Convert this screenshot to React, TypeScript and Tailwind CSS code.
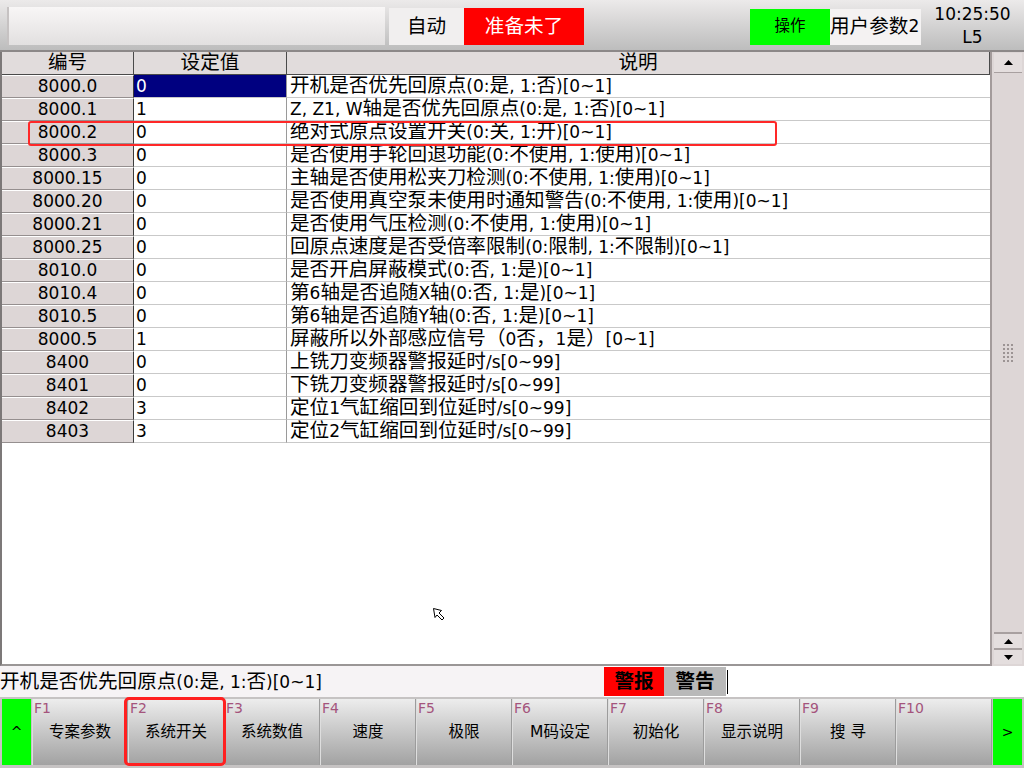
import React from "react";

const rows: [string, string, string][] = [
  ["8000.0", "0", "开机是否优先回原点(0:是, 1:否)[0~1]"],
  ["8000.1", "1", "Z, Z1, W轴是否优先回原点(0:是, 1:否)[0~1]"],
  ["8000.2", "0", "绝对式原点设置开关(0:关, 1:开)[0~1]"],
  ["8000.3", "0", "是否使用手轮回退功能(0:不使用, 1:使用)[0~1]"],
  ["8000.15", "0", "主轴是否使用松夹刀检测(0:不使用, 1:使用)[0~1]"],
  ["8000.20", "0", "是否使用真空泵未使用时通知警告(0:不使用, 1:使用)[0~1]"],
  ["8000.21", "0", "是否使用气压检测(0:不使用, 1:使用)[0~1]"],
  ["8000.25", "0", "回原点速度是否受倍率限制(0:限制, 1:不限制)[0~1]"],
  ["8010.0", "0", "是否开启屏蔽模式(0:否, 1:是)[0~1]"],
  ["8010.4", "0", "第6轴是否追随X轴(0:否, 1:是)[0~1]"],
  ["8010.5", "0", "第6轴是否追随Y轴(0:否, 1:是)[0~1]"],
  ["8000.5", "1", "屏蔽所以外部感应信号（0否，1是）[0~1]"],
  ["8400", "0", "上铣刀变频器警报延时/s[0~99]"],
  ["8401", "0", "下铣刀变频器警报延时/s[0~99]"],
  ["8402", "3", "定位1气缸缩回到位延时/s[0~99]"],
  ["8403", "3", "定位2气缸缩回到位延时/s[0~99]"],
];

const fkeys: [string, string][] = [
  ["F1", "专案参数"],
  ["F2", "系统开关"],
  ["F3", "系统数值"],
  ["F4", "速度"],
  ["F5", "极限"],
  ["F6", "M码设定"],
  ["F7", "初始化"],
  ["F8", "显示说明"],
  ["F9", "搜 寻"],
  ["F10", ""],
];

function Mixed({ text }: { text: string }) {
  const parts = text.split(/([\u3000-\u9fff\uff00-\uffef]+)/);
  return (
    <>
      {parts.map((p, i) =>
        /[\u3000-\u9fff\uff00-\uffef]/.test(p) ? (
          <span key={i} className="text-[19.6px]">{p}</span>
        ) : (
          <span key={i}>{p}</span>
        )
      )}
    </>
  );
}

function Tri({ up }: { up: boolean }) {
  return (
    <svg width="9" height="5" viewBox="0 0 9 5">
      {up ? <polygon points="0,5 9,5 4.5,0" fill="#000" /> : <polygon points="0,0 9,0 4.5,5" fill="#000" />}
    </svg>
  );
}

export default function App() {
  return (
    <div className="relative w-[1024px] h-[768px] overflow-hidden bg-[#cfcbcb] flex flex-col font-[family-name:'DejaVu_Sans','Noto_Sans_CJK_SC',sans-serif] text-black">
      {/* Top bar */}
      <div className="h-[52px] shrink-0 flex items-start bg-gradient-to-b from-[#eceaea] to-[#bdbdbd] border-b-2 border-[#8c8888]">
        <div className="ml-[7px] mt-[7px] w-[378px] h-[38px] bg-gradient-to-b from-[#f8f6f6] to-[#e2e0e0] border-l-2 border-[#c6c2c2]" />
        <div className="ml-[4px] mt-[8px] w-[75px] h-[37px] bg-[#f1efef] flex items-center justify-center text-[19.6px]">自动</div>
        <div className="mt-[8px] w-[120px] h-[37px] bg-[#ff0000] text-white flex items-center justify-center text-[19.6px]">准备未了</div>
        <div className="flex-1" />
        <div className="mt-[9px] w-[80px] h-[36px] bg-[#00ff00] flex items-center justify-center text-[15.5px]">操作</div>
        <div className="mt-[9px] w-[91px] h-[36px] bg-[#f4f2f2] flex items-center text-[19.6px] whitespace-nowrap overflow-hidden">
          用户参数<span className="text-[17px]">2</span>
        </div>
        <div className="w-[103px] h-[50px] flex flex-col items-center pt-[3px] text-[17px] leading-[23px]">
          <div>10:25:50</div>
          <div>L5</div>
        </div>
      </div>

      {/* Table area */}
      <div className="h-[614px] shrink-0 flex">
        <div className="w-[990px] flex flex-col bg-white border-l-2 border-[#7c7878] border-b-2 border-b-[#9a9696]">
          <div className="grid grid-cols-[132px_153px_1fr] h-[23px] text-[19.6px] leading-[22px] bg-[#e1dcdc]">
            <div className="text-center border-r border-b border-[#4a4a4a]">编号</div>
            <div className="text-center border-r border-b border-[#4a4a4a]">设定值</div>
            <div className="text-center border-r border-b border-[#4a4a4a]">说明</div>
          </div>
          {rows.map(([id, val, desc], i) => (
            <div key={id} className="grid grid-cols-[132px_153px_1fr] h-[23px] text-[17px] leading-[21px]">
              <div className="text-center bg-[#ddd6d6] border-t border-white border-b border-r border-b-[#958f8f] border-r-[#3c3c3c]">{id}</div>
              <div className={"pl-[2px] border-b border-r border-b-[#c9c9c9] border-r-[#9a9a9a] leading-[22px] " + (i === 0 ? "bg-[#000080] text-white" : "")}>{val}</div>
              <div className="pl-[3px] border-b border-[#c9c9c9] whitespace-nowrap leading-[22px]">
                <Mixed text={desc} />
              </div>
            </div>
          ))}
          <div className="flex-1" />
        </div>
        <div className="w-[34px] flex flex-col bg-[#ddd6d6] border-l-2 border-[#a39b9b] pb-[2px]">
          <div className="h-[20px] mx-[2px] mt-[1px] bg-[#e4dede] border-b border-[#a8a0a0] flex items-center justify-center">
            <Tri up />
          </div>
          <div className="flex-1 flex items-center justify-center">
            <div className="grid grid-cols-3 gap-[2px]">
              {Array.from({ length: 15 }).map((_, k) => (
                <div key={k} className="w-[2px] h-[2px] bg-[#9c9494]" />
              ))}
            </div>
          </div>
          <div className="h-[16px] mx-[2px] bg-[#e4dede] border-t-2 border-[#a8a0a0] flex items-center justify-center">
            <Tri up />
          </div>
          <div className="h-[16px] mx-[2px] bg-[#e4dede] border-t-2 border-[#a8a0a0] flex items-center justify-center">
            <Tri up={false} />
          </div>
        </div>
      </div>

      {/* Status bar */}
      <div className="h-[31px] shrink-0 flex bg-white">
        <div className="w-[604px] bg-[#f6f3f5] text-[17px] leading-[31px] whitespace-nowrap overflow-hidden">
          <Mixed text="开机是否优先回原点(0:是, 1:否)[0~1]" />
        </div>
        <div className="w-[60px] my-[1px] bg-[#ff0000] flex items-center justify-center text-[19.6px] font-bold">警报</div>
        <div className="w-[62px] my-[1px] bg-[#b9b9b9] flex items-center justify-center text-[19.6px] font-bold">警告</div>
        <div className="flex-1 flex items-center pl-[1px]">
          <div className="w-[1px] h-[24px] bg-black" />
        </div>
      </div>

      {/* Function keys */}
      <div className="flex-1 flex bg-[#c6c3c3] pt-[2px] pb-[3px] pl-[2px]">
        <div className="w-[29px] bg-[#00ff00] flex items-center justify-center text-[14px]">^</div>
        <div className="flex ml-[1px]">
          {fkeys.map(([f, label]) => (
            <div key={f} className="relative w-[96px] bg-gradient-to-b from-[#ededed] to-[#a2a2a2] border-l border-[#dedede] border-r border-r-[#9c9c9c] flex items-center justify-center text-[15.5px]">
              <span className="absolute left-[1px] top-[1px] text-[14px] leading-[16px] text-[#a4547c]">{f}</span>
              <span className="mt-[2px] whitespace-pre">{label}</span>
            </div>
          ))}
        </div>
        <div className="w-[29px] ml-[1px] bg-[#00ff00] flex items-center justify-center text-[14px]">&gt;</div>
      </div>

      {/* Annotation overlays */}
      <div className="absolute left-[28px] top-[121px] w-[749px] h-[25px] border-2 border-[#ff2828] rounded-[3px]" />
      <div className="absolute left-[124px] top-[697px] w-[102px] h-[69px] border-[3px] border-[#ff2020] rounded-[5px]" />

      {/* Mouse cursor */}
      <svg className="absolute left-[432px] top-[607px]" width="14" height="16" viewBox="0 0 14 16">
        <polygon points="1.5,1.5 9.5,3.5 7,6 12,11 10,13 5,8 3,10.5" fill="#fff" stroke="#000" strokeWidth="1" strokeLinejoin="miter" />
      </svg>
    </div>
  );
}
